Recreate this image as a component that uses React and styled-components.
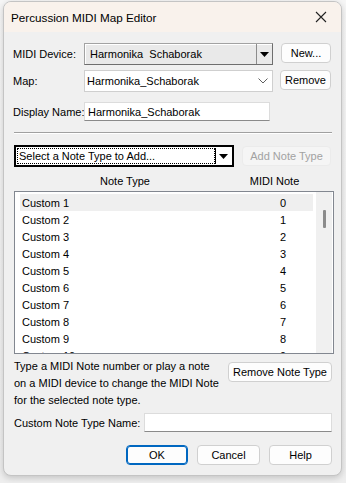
import styled, { createGlobalStyle } from "styled-components";

const GlobalStyle = createGlobalStyle`
  html, body {
    margin: 0;
    padding: 0;
    background: #f3f3f3;
  }
  body {
    font-family: "Liberation Sans", Arial, sans-serif;
    font-size: 11px;
    color: #000;
  }
`;

const Desktop = styled.div`
  width: 346px;
  height: 483px;
  padding: 1px 4px 0 3px;
  box-sizing: border-box;
  overflow: hidden;
  background: linear-gradient(#f6f6f6, #eeeeee);
  font-family: "Liberation Sans", Arial, sans-serif;
  font-size: 11px;
`;

const Window = styled.div`
  width: 339px;
  height: 475px;
  box-sizing: border-box;
  border: 1px solid #c4c4c4;
  border-radius: 8px;
  overflow: hidden;
  background: #f0f0f0;
  box-shadow: 0 2px 6px rgba(0, 0, 0, 0.18);
  display: flex;
  flex-direction: column;
`;

const TitleBar = styled.div`
  height: 30px;
  flex: none;
  display: flex;
  align-items: center;
  justify-content: space-between;
  padding: 0 6px 0 7px;
  background: #f9f2ec;
  font-size: 11.7px;
`;

const CloseButton = styled.div`
  width: 28px;
  height: 28px;
  display: flex;
  align-items: center;
  justify-content: center;
`;

const Body = styled.div`
  flex: 1;
  display: flex;
  flex-direction: column;
  padding: 11px 9px 0 9px;
`;

const FormRow = styled.div`
  display: flex;
  align-items: center;
  height: ${(p) => p.$h || 22}px;
  margin-top: ${(p) => p.$mt || 0}px;
`;

const Label = styled.div`
  width: ${(p) => p.$w || 71}px;
  flex: none;
  white-space: nowrap;
`;

const DeviceCombo = styled.div`
  width: 189px;
  height: 22px;
  box-sizing: border-box;
  display: flex;
  align-items: center;
  background: #e9e9e9;
  border: 1px solid #a2a2a2;
  border-right-color: #6e6e6e;
  border-bottom-color: #6e6e6e;
  box-shadow: inset 1px 1px 0 #fff;
`;

const ComboText = styled.div`
  flex: 1;
  padding-left: ${(p) => p.$pl || 5}px;
  white-space: pre;
`;

const ArrowBox = styled.div`
  width: 16px;
  height: 100%;
  display: flex;
  align-items: center;
  justify-content: center;
  border-left: 1px solid ${(p) => p.$line || "#8c8c8c"};
  box-sizing: border-box;
`;

const MapCombo = styled.div`
  width: 189px;
  height: 22px;
  box-sizing: border-box;
  display: flex;
  align-items: center;
  background: #fff;
  border: 1px solid #cfcfcf;
`;

const Chevron = styled.div`
  width: 18px;
  display: flex;
  justify-content: center;
`;

const Button = styled.div`
  width: ${(p) => p.$w}px;
  height: ${(p) => p.$h || 20}px;
  margin-left: ${(p) => p.$ml || 0}px;
  margin-top: ${(p) => p.$mt || 0}px;
  box-sizing: border-box;
  display: flex;
  align-items: center;
  justify-content: center;
  background: ${(p) => (p.$disabled ? "#f5f5f5" : "#fdfdfd")};
  color: ${(p) => (p.$disabled ? "#a2a2a2" : "#000")};
  border: ${(p) => (p.$primary ? "1px solid #0067c0" : p.$disabled ? "1px solid #ebebeb" : "1px solid #d0d0d0")};
  box-shadow: ${(p) => (p.$primary ? "inset 0 0 0 1px #0067c0" : "none")};
  border-radius: 4px;
  white-space: nowrap;
  flex: none;
  align-self: ${(p) => (p.$top ? "flex-start" : "auto")};
`;

const TextInput = styled.div`
  width: ${(p) => p.$w}px;
  height: ${(p) => p.$h || 19}px;
  box-sizing: border-box;
  background: #fff;
  border: 1px solid #dcdcdc;
  border-bottom-color: #8a8a8a;
  display: flex;
  align-items: center;
  padding-left: 3px;
`;

const Separator = styled.div`
  height: 1px;
  margin: 11px 0 0 1px;
  width: 318px;
  background: #a0a0a0;
  border-bottom: 1px solid #ffffff;
`;

const NoteSelect = styled.div`
  width: 220px;
  height: 22px;
  margin-left: 1px;
  box-sizing: border-box;
  border: 2px solid #000;
  background: #fff;
  display: flex;
  align-items: stretch;
  padding: 1px;
`;

const FocusText = styled.div`
  flex: 1;
  display: flex;
  align-items: center;
  padding-left: 2px;
  outline: 1px dotted #000;
  outline-offset: -1px;
  background: #fff;
`;

const Headers = styled.div`
  display: flex;
  margin-top: 7px;
  height: 14px;
  align-items: center;
`;

const HeaderCell = styled.div`
  width: ${(p) => p.$w}px;
  text-align: center;
  flex: none;
`;

const ListBox = styled.div`
  margin: 3px 0 0 1px;
  width: 320px;
  height: 163px;
  box-sizing: border-box;
  border: 1px solid #828790;
  background: #fff;
  display: flex;
  overflow: hidden;
`;

const Rows = styled.div`
  flex: 1;
  padding: 2px 3px 0 5px;
`;

const Row = styled.div`
  display: flex;
  height: 17px;
  align-items: center;
  background: ${(p) => (p.$selected ? "#efefef" : "transparent")};
`;

const NoteName = styled.div`
  flex: 1;
  padding-left: 2px;
`;

const NoteNum = styled.div`
  width: 30px;
  text-align: center;
  margin-right: 15px;
`;

const ScrollTrack = styled.div`
  width: 16px;
  flex: none;
  background: #f0f0f0;
  margin-right: 1px;
  position: relative;
`;

const ScrollThumb = styled.div`
  position: absolute;
  left: 7px;
  top: 18px;
  width: 3px;
  height: 18px;
  border-radius: 1px;
  background: #8b8b8b;
`;

const HelpRow = styled.div`
  display: flex;
  justify-content: space-between;
  margin: 4px 0 0 1px;
`;

const HelpText = styled.div`
  line-height: 17px;
  width: 205px;
`;

const NameRow = styled.div`
  display: flex;
  align-items: center;
  margin: 4px 0 0 1px;
  height: 19px;
`;

const Footer = styled.div`
  display: flex;
  justify-content: flex-end;
  gap: 9px;
  margin-top: 13px;
`;

const notes = Array.from({ length: 10 }, (_, i) => ({ name: `Custom ${i + 1}`, num: i }));

export default function App() {
  return (
    <Desktop>
      <GlobalStyle />
      <Window>
        <TitleBar>
          <span>Percussion MIDI Map Editor</span>
          <CloseButton>
            <svg width="12" height="12" viewBox="0 0 12 12">
              <path d="M1 1 L11 11 M11 1 L1 11" stroke="#222" strokeWidth="1.1" />
            </svg>
          </CloseButton>
        </TitleBar>
        <Body>
          <FormRow>
            <Label>MIDI Device:</Label>
            <DeviceCombo>
              <ComboText>Harmonika  Schaborak</ComboText>
              <ArrowBox>
                <svg width="9" height="5" viewBox="0 0 9 5">
                  <path d="M0 0 H9 L4.5 5 Z" fill="#000" />
                </svg>
              </ArrowBox>
            </DeviceCombo>
            <Button $w={50} $ml={8} $top>New...</Button>
          </FormRow>
          <FormRow $mt={5}>
            <Label>Map:</Label>
            <MapCombo>
              <ComboText $pl={2}>Harmonika_Schaborak</ComboText>
              <Chevron>
                <svg width="10" height="6" viewBox="0 0 10 6">
                  <path d="M0.5 0.5 L5 5 L9.5 0.5" fill="none" stroke="#606060" strokeWidth="1" />
                </svg>
              </Chevron>
            </MapCombo>
            <Button $w={51} $ml={7} $top>Remove</Button>
          </FormRow>
          <FormRow $mt={10} $h={19}>
            <Label>Display Name:</Label>
            <TextInput $w={186}>Harmonika_Schaborak</TextInput>
          </FormRow>
          <Separator />
          <FormRow $mt={11}>
            <NoteSelect>
              <FocusText>Select a Note Type to Add...</FocusText>
              <ArrowBox $line="#000">
                <svg width="9" height="5" viewBox="0 0 9 5">
                  <path d="M0 0 H9 L4.5 5 Z" fill="#000" />
                </svg>
              </ArrowBox>
            </NoteSelect>
            <Button $w={89} $ml={8} $disabled>Add Note Type</Button>
          </FormRow>
          <Headers>
            <HeaderCell $w={224}>Note Type</HeaderCell>
            <HeaderCell $w={75}>MIDI Note</HeaderCell>
          </Headers>
          <ListBox>
            <Rows>
              {notes.map((n, i) => (
                <Row key={n.name} $selected={i === 0}>
                  <NoteName>{n.name}</NoteName>
                  <NoteNum>{n.num}</NoteNum>
                </Row>
              ))}
            </Rows>
            <ScrollTrack>
              <ScrollThumb />
            </ScrollTrack>
          </ListBox>
          <HelpRow>
            <HelpText>
              Type a MIDI Note number or play a note on a MIDI device to change the MIDI Note for the selected note type.
            </HelpText>
            <Button $w={104} $top $mt={4}>Remove Note Type</Button>
          </HelpRow>
          <NameRow>
            <Label $w={130}>Custom Note Type Name:</Label>
            <TextInput $w={189} $h={19} />
          </NameRow>
          <Footer>
            <Button $w={62} $primary>OK</Button>
            <Button $w={63}>Cancel</Button>
            <Button $w={63}>Help</Button>
          </Footer>
        </Body>
      </Window>
    </Desktop>
  );
}
